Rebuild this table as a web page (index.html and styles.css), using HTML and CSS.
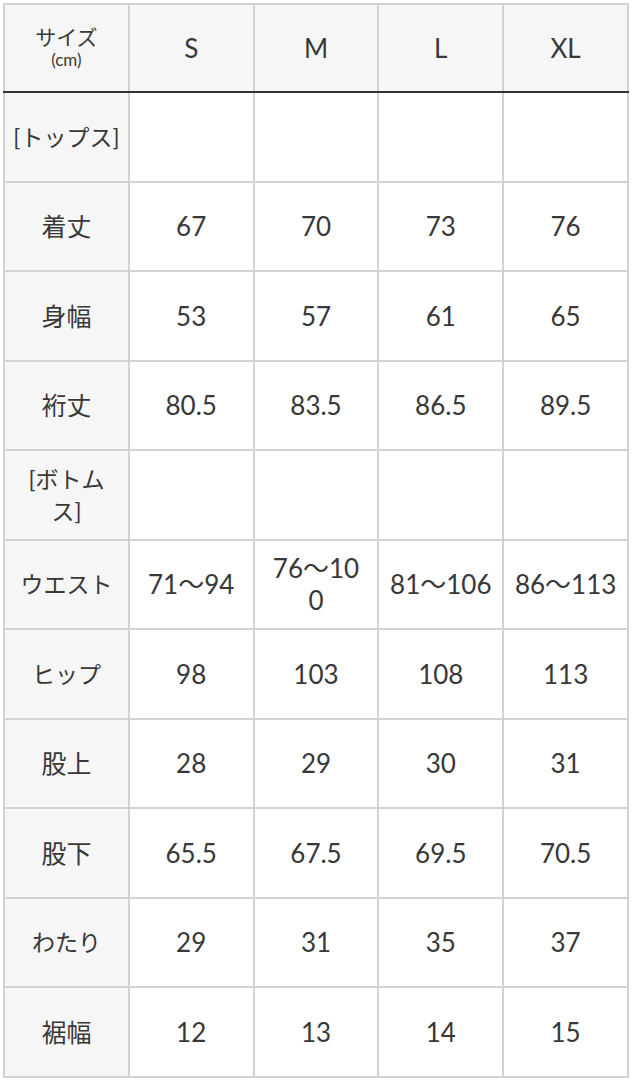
FILE: index.html
```html
<!DOCTYPE html>
<html lang="ja">
<head>
<meta charset="utf-8">
<title>サイズ表</title>
<link rel="stylesheet" href="styles.css">
</head>
<body>
<table class="size-table">
  <thead>
    <tr>
      <th class="corner"><span class="corner-main">サイズ</span><span class="corner-unit">(cm)</span></th>
      <th>S</th>
      <th>M</th>
      <th>L</th>
      <th>XL</th>
    </tr>
  </thead>
  <tbody>
    <tr><th>[トップス]</th><td></td><td></td><td></td><td></td></tr>
    <tr><th class="kanji">着丈</th><td>67</td><td>70</td><td>73</td><td>76</td></tr>
    <tr><th class="kanji">身幅</th><td>53</td><td>57</td><td>61</td><td>65</td></tr>
    <tr><th class="kanji">裄丈</th><td>80.5</td><td>83.5</td><td>86.5</td><td>89.5</td></tr>
    <tr><th>[ボトム<br>ス]</th><td></td><td></td><td></td><td></td></tr>
    <tr><th>ウエスト</th><td>71〜94</td><td>76〜10<br>0</td><td>81〜106</td><td>86〜113</td></tr>
    <tr><th>ヒップ</th><td>98</td><td>103</td><td>108</td><td>113</td></tr>
    <tr><th class="kanji">股上</th><td>28</td><td>29</td><td>30</td><td>31</td></tr>
    <tr><th class="kanji">股下</th><td>65.5</td><td>67.5</td><td>69.5</td><td>70.5</td></tr>
    <tr><th>わたり</th><td>29</td><td>31</td><td>35</td><td>37</td></tr>
    <tr><th class="kanji">裾幅</th><td>12</td><td>13</td><td>14</td><td>15</td></tr>
  </tbody>
</table>
</body>
</html>
```
FILE: styles.css
```css
html, body {
  margin: 0;
  padding: 0;
  background: #ffffff;
}
body {
  padding: 3px 3px 0 3px;
  font-family: "Lato", "Noto Sans CJK JP", sans-serif;
  color: #383838;
}
.size-table {
  width: 626px;
  border-collapse: collapse;
  table-layout: fixed;
}
.size-table th,
.size-table td {
  border: 2px solid #d2d2d2;
  height: 87.5px;
  padding: 0 6px;
  text-align: center;
  vertical-align: middle;
  font-weight: 400;
  font-size: 26px;
  line-height: 32px;
}
.size-table thead th {
  height: 86px;
  background: #f6f6f6;
  border-bottom: 2px solid #333333;
}
.size-table tbody th {
  background: #f6f6f6;
  font-size: 23px;
}
.size-table tbody th.kanji {
  font-size: 25px;
}
.corner {
  line-height: 1;
}
.corner-main {
  display: block;
  font-size: 21px;
  line-height: 24px;
}
.corner-unit {
  display: block;
  font-size: 17px;
  line-height: 22px;
}
```
